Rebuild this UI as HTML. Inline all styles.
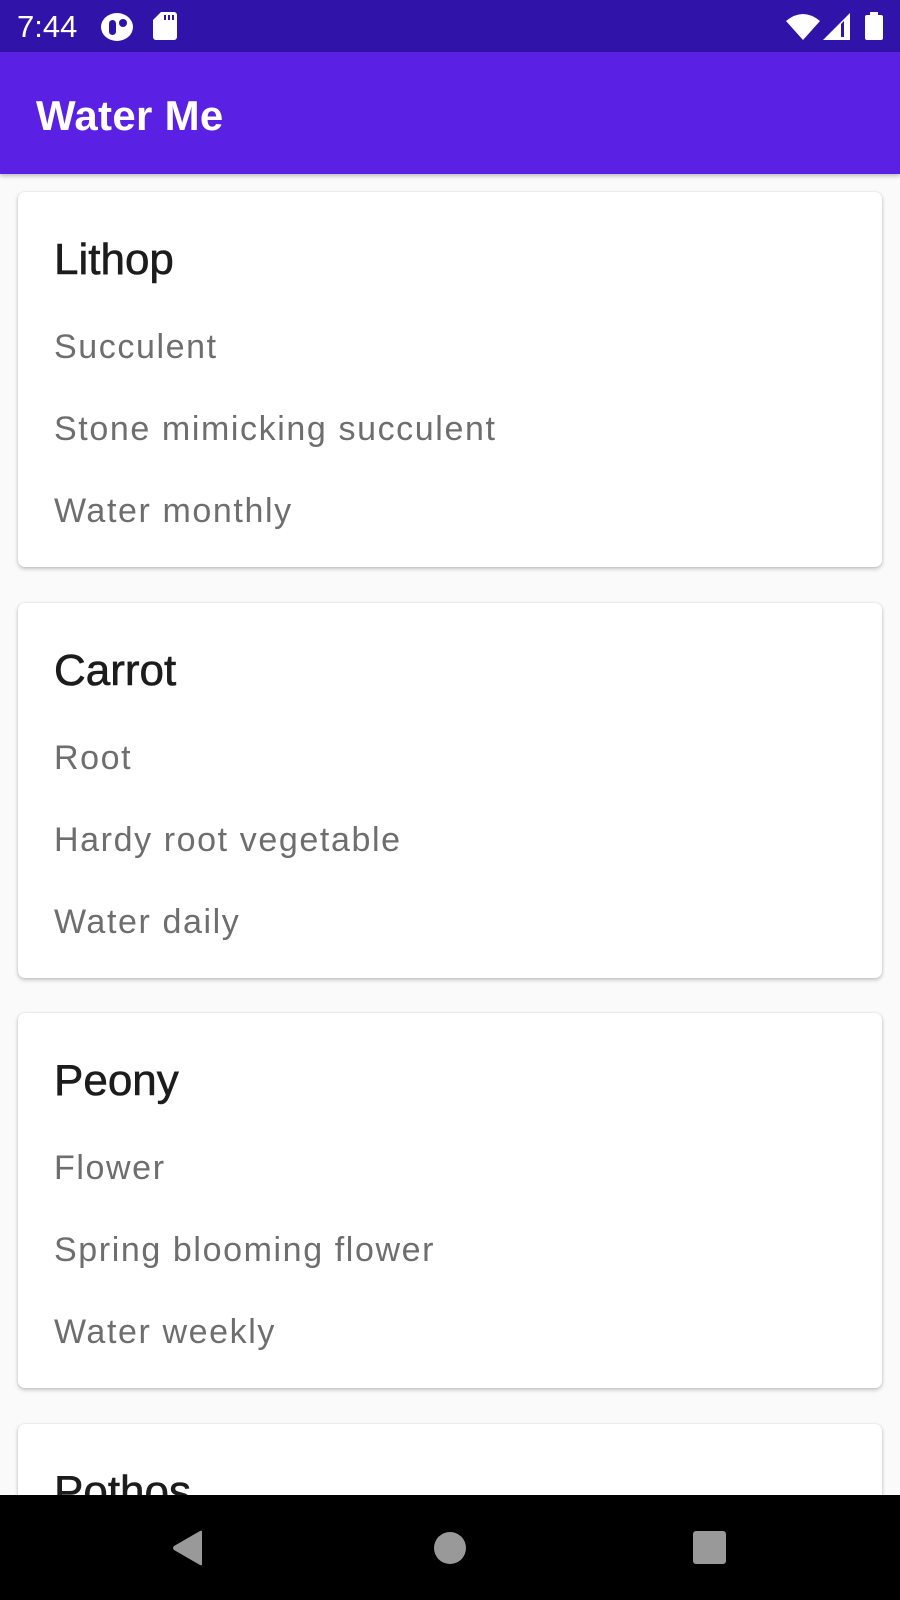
<!DOCTYPE html>
<html style="width:900px;height:1600px;overflow:hidden"><head><meta charset="utf-8"><style>
*{margin:0;padding:0;box-sizing:border-box}
body{width:900px;height:1600px;overflow:hidden;background:#fafafa;font-family:"Liberation Sans",sans-serif;position:relative}
#w{position:absolute;left:0;top:0;width:900px;height:1600px;overflow:hidden}
.sb{position:absolute;left:0;top:0;width:900px;height:52px;background:#3014aa}
.ab{position:absolute;left:0;top:52px;width:900px;height:122px;background:#5a21e5;box-shadow:0 2px 4px rgba(0,0,0,.25)}
.ab span{position:absolute;left:36px;top:40px;font-size:42px;color:#fff;font-weight:bold;letter-spacing:0.3px}
.t{position:absolute;color:#fff;font-size:31px;left:17px;top:9px}
.card{position:absolute;left:18px;width:864px;height:375px;background:#fff;border-radius:7px;box-shadow:0 2px 4px rgba(0,0,0,.22),0 0 2px rgba(0,0,0,.1)}
.card h2{position:absolute;left:36px;top:43px;font-size:44px;font-weight:normal;color:#1c1c1c;-webkit-text-stroke:0.6px #1c1c1c}
.card p{position:absolute;left:36px;font-size:34px;color:#6e6e6e;letter-spacing:1.6px}
.nav{position:absolute;left:0;top:1495px;width:900px;height:105px;background:#000}
</style></head><body><div id="w">
<div class="sb">
<div class="t">7:44</div>
<svg style="position:absolute;left:100px;top:13px" width="34" height="28" viewBox="0 0 34 28"><ellipse cx="17" cy="14" rx="16" ry="14" fill="#fff"/><rect x="9" y="7" width="7" height="15" rx="3.5" fill="#3014aa"/><circle cx="23" cy="10" r="4" fill="#3014aa"/></svg>
<svg style="position:absolute;left:153px;top:12px" width="24" height="28" viewBox="0 0 24 28"><path d="M8 0H21a3 3 0 0 1 3 3V25a3 3 0 0 1-3 3H3a3 3 0 0 1-3-3V8z" fill="#fff"/><rect x="11" y="3" width="2" height="5" fill="#3014aa"/><rect x="15" y="3" width="2" height="5" fill="#3014aa"/><rect x="19" y="3" width="2" height="5" fill="#3014aa"/></svg>
<svg style="position:absolute;left:786px;top:13px" width="34" height="27" viewBox="0 0 34 27"><path d="M0 8Q17-6 34 8L17 27Z" fill="#fff"/></svg>
<svg style="position:absolute;left:823px;top:13px" width="28" height="27" viewBox="0 0 28 27"><path d="M27 0V27H0Z" fill="#fff"/><path d="M18 11V24H21V8Z" fill="#3014aa"/></svg>
<svg style="position:absolute;left:865px;top:12px" width="18" height="28" viewBox="0 0 18 28"><rect x="5" y="0" width="8" height="4" fill="#fff"/><rect x="0" y="3" width="18" height="25" rx="2" fill="#fff"/></svg>
</div>
<div class="ab"><span>Water Me</span></div>

<div class="card" style="top:192px"><h2>Lithop</h2><p style="top:136px">Succulent</p><p style="top:218px">Stone mimicking succulent</p><p style="top:300px">Water monthly</p></div>
<div class="card" style="top:603px"><h2>Carrot</h2><p style="top:136px">Root</p><p style="top:218px">Hardy root vegetable</p><p style="top:300px">Water daily</p></div>
<div class="card" style="top:1013px"><h2>Peony</h2><p style="top:136px">Flower</p><p style="top:218px">Spring blooming flower</p><p style="top:300px">Water weekly</p></div>
<div class="card" style="top:1424px;height:176px"><h2>Pothos</h2></div>

<div class="nav">
<svg style="position:absolute;left:172px;top:35px" width="32" height="36" viewBox="0 0 32 36"><path d="M30 2Q30 0 28 1L2 16Q0 18 2 20L28 35Q30 36 30 34Z" fill="#999"/></svg>
<div style="position:absolute;left:434px;top:37px;width:32px;height:32px;border-radius:50%;background:#999"></div>
<div style="position:absolute;left:693px;top:36px;width:33px;height:33px;border-radius:3px;background:#999"></div>
</div>
</div></body></html>
